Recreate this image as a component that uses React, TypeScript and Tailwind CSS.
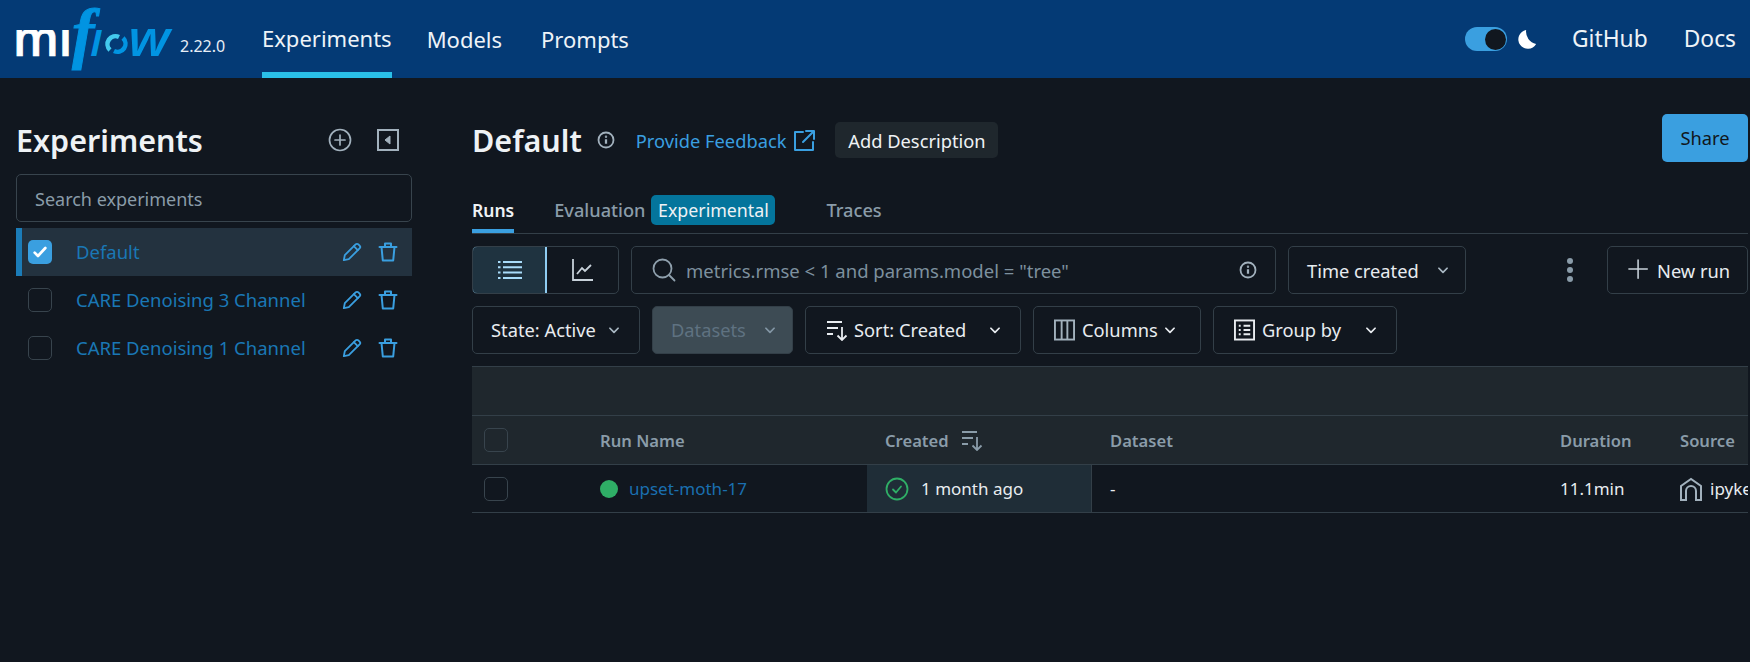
import React from 'react';

const font = '"Noto Sans", "Open Sans", sans-serif';

type IconProps = { className?: string };

function Stroke({ className, children, box = 24, width = 2 }: IconProps & { children: React.ReactNode; box?: number; width?: number }) {
  return (
    <svg viewBox={`0 0 ${box} ${box}`} fill="none" stroke="currentColor" strokeWidth={width} strokeLinecap="round" strokeLinejoin="round" className={className}>
      {children}
    </svg>
  );
}

const Chevron = ({ className = 'w-[14px] h-[14px] text-[#a9b8c3]' }: IconProps) => (
  <Stroke className={className} width={3}><path d="M5 9l7 7 7-7" /></Stroke>
);

const Info = ({ className }: IconProps) => (
  <Stroke className={className} width={2.4}>
    <circle cx="12" cy="12" r="10" />
    <path d="M12 11v6" strokeWidth={3} strokeLinecap="butt" />
    <circle cx="12" cy="7.5" r="0.6" strokeWidth={2} />
  </Stroke>
);

const Pencil = () => (
  <Stroke className="w-[20px] h-[20px] text-[#3a9fe0]" box={20} width={1.8}>
    <path d="M1.8 18.2l1-5L13.6 2.4c.8-.8 2-.8 2.8 0l1.2 1.2c.8.8.8 2 0 2.8L6.800 17.200z" />
    <path d="M11.800 4.200l4 4" />
  </Stroke>
);

const Trash = () => (
  <Stroke className="w-[20px] h-[22px] text-[#3a9fe0]" box={20} width={2}>
    <path d="M1.500 5h17" />
    <path d="M7 5V1.500h6V5" />
    <path d="M3.500 5l1.300 13.500h10.400L16.500 5" />
  </Stroke>
);

const SortIcon = ({ className }: IconProps) => (
  <svg viewBox="0 0 22 22" fill="none" stroke="currentColor" strokeWidth="1.800" className={className}>
    <path d="M1 3h15M1 9h11M1 15h6" />
    <path d="M16 8v13M11.500 16.500L16 21l4.500-4.500" />
  </svg>
);

function Logo() {
  return (
    <svg width="160" height="66" viewBox="0 0 160 66" className="shrink-0">
      <clipPath id="logo-top"><rect x="0" y="24" width="160" height="42" /></clipPath>
      {/* keeps the f's crossbar off the l of "ml" */}
      <clipPath id="logo-f">
        <rect x="55" y="0" width="105" height="52" />
        <rect x="40" y="52" width="120" height="14" />
      </clipPath>
      <text x="-1" y="50" fill="#ffffff" stroke="#ffffff" strokeWidth="0.7" clipPath="url(#logo-top)" fontFamily='"Open Sans", sans-serif' fontWeight="600" fontSize="48">ml</text>
      <text x="58" y="50" fill="#0194e2" clipPath="url(#logo-f)" fontFamily='"Liberation Serif", serif' fontStyle="italic" fontWeight="700" stroke="#0194e2" strokeWidth="1" fontSize="67">f</text>
      <text x="76" y="50" fill="#0194e2" clipPath="url(#logo-top)" fontFamily='"Open Sans", sans-serif' fontStyle="italic" fontWeight="600" fontSize="46">l</text>
      <path d="M96 44a8 8 0 0 1 9-13" fill="none" stroke="#43c9ed" strokeWidth="4.500" />
      <path d="M109 32a8 8 0 0 1-9 13" fill="none" stroke="#0194e2" strokeWidth="4.500" />
      <text x="114" y="50" fill="#0194e2" fontFamily='"Open Sans", sans-serif' fontStyle="italic" fontWeight="600" fontSize="48" textLength="42" lengthAdjust="spacingAndGlyphs">w</text>
    </svg>
  );
}

const experiments = [
  { name: 'Default', checked: true },
  { name: 'CARE Denoising 3 Channel', checked: false },
  { name: 'CARE Denoising 1 Channel', checked: false },
];

const btn = 'h-12 rounded-[5px] border border-[#333f48] flex items-center text-[18.300px] shrink-0';
const checkbox = 'w-6 h-6 rounded-[5px] border border-[#38444d]';
const headCell = 'pl-[18px] flex items-center text-[16.600px] font-semibold text-[#8a9ca9] overflow-hidden whitespace-nowrap';
const bodyCell = 'pl-[18px] flex items-center text-[17px] text-[#e8ecf0] overflow-hidden whitespace-nowrap';

export default function App() {
  return (
    <div className="w-full h-[662px] overflow-hidden bg-[#11171f]" style={{ fontFamily: font }}>
      {/* Top nav */}
      <header className="h-[78px] bg-[#043a75] flex items-center pl-[14px] pr-[14px] text-white">
        <Logo />
        <span className="text-[16px] mt-[14px] ml-[6px] w-[82px] text-[#e8eef5]">2.22.0</span>
        <nav className="flex h-full text-[22px] text-[#eef3f8]">
          <a className="h-full flex items-center border-b-[6px] border-[#2ac0e8] pt-[4px]">Experiments</a>
          <a className="h-full flex items-center ml-[35px]">Models</a>
          <a className="h-full flex items-center ml-[39px]">Prompts</a>
        </nav>
        <div className="ml-auto flex items-center text-[22.800px] text-[#eef3f8]">
          <div className="w-[42px] h-6 rounded-full bg-[#3a9fe0] flex items-center justify-end pr-[1px]">
            <div className="w-[21px] h-[21px] rounded-full bg-[#11171f]" />
          </div>
          <svg viewBox="0 0 21 22" className="w-[19px] h-[22px] ml-[11px]" fill="white">
            <path d="M9 1A10.500 10.500 0 1 0 20 16.500A14 14 0 0 1 9 1z" />
          </svg>
          <a className="ml-[35px]">GitHub</a>
          <a className="ml-[36px]">Docs</a>
        </div>
      </header>

      <div className="flex">
        {/* Sidebar */}
        <aside className="w-[472px] shrink-0 pl-4 pr-[60px] pt-9">
          <div className="h-[52px] flex items-center">
            <h1 className="text-[30.500px] font-semibold text-[#eef2f5] pt-[2px]">Experiments</h1>
            <Stroke className="w-6 h-6 ml-auto text-[#a2b1bd]" width={1.700}>
              <circle cx="12" cy="12" r="10.500" />
              <path d="M12 7v10M7 12h10" />
            </Stroke>
            <svg viewBox="0 0 22 22" className="w-[22px] h-[22px] ml-[25px] mr-[13px] text-[#a2b1bd]" fill="none" stroke="currentColor" strokeWidth="2">
              <rect x="1" y="1" width="20" height="20" />
              <path d="M13 7v8l-5-4z" fill="currentColor" strokeWidth="1" />
            </svg>
          </div>
          <div className="mt-2 h-12 rounded-[5px] border border-[#38444d] pl-[18px] pt-[2px] flex items-center text-[18px] text-[#8a9ca9]">
            Search experiments
          </div>
          <ul className="mt-[6px]">
            {experiments.map((e) => (
              <li key={e.name} className={`h-12 flex items-center text-[18.500px] text-[#1a77b5] pl-3 ${e.checked ? 'bg-[#23323f] relative' : ''}`}>
                {e.checked && <span className="absolute left-0 top-0 bottom-0 w-[6px] bg-[#1b7cb8]" />}
                {e.checked ? (
                  <span className="w-6 h-6 rounded-[5px] bg-[#3a9fe0] flex items-center justify-center relative">
                    <Stroke className="w-[16px] h-[16px] text-white" width={4}><path d="M4 13l5 5 11-12" /></Stroke>
                  </span>
                ) : (
                  <span className={checkbox} />
                )}
                <span className="ml-6">{e.name}</span>
                <span className="ml-auto mr-[14px] flex items-center gap-4"><Pencil /><Trash /></span>
              </li>
            ))}
          </ul>
        </aside>

        {/* Main */}
        <main className="flex-1 pr-[2px] pt-9 min-w-0">
          <div className="flex items-start">
            <div className="h-[52px] flex items-center">
              <h2 className="text-[30.500px] font-semibold text-[#eef2f5] pt-[2px]">Default</h2>
              <Info className="w-[18px] h-[18px] ml-[15px] text-[#a2b1bd]" />
              <a className="ml-[21px] pt-[2px] text-[18.300px] text-[#3a9fe0]">Provide Feedback</a>
              <Stroke className="w-[23px] h-[23px] ml-[7px] text-[#3a9fe0]" box={23} width={2}>
                <path d="M10 3H2v18h18v-8" />
                <path d="M13 2h8v8M21 2L10 13" />
              </Stroke>
              <button className="ml-[19px] h-9 w-[163px] pt-[2px] rounded-[5px] bg-[#1f272d] text-[18.300px] text-[#eef2f5] whitespace-nowrap">Add Description</button>
            </div>
            <button className="ml-auto w-[86px] h-12 rounded-[5px] bg-[#3a9fe0] text-[18.300px] text-[#11171c]">Share</button>
          </div>

          {/* Tabs */}
          <div className="mt-[29px] h-[39px] border-b border-[#333f48] flex items-start text-[18.200px] font-medium text-[#8a9ca9]">
            <span className="h-[38px] border-b-4 border-[#3a9fe0] text-[#eef2f5] text-[17.500px] font-semibold leading-[30px]">Runs</span>
            <span className="ml-[40px] leading-[30px]">Evaluation</span>
            <span className="ml-[6px] h-[30px] w-[124px] text-center rounded-[5px] bg-[#04759c] text-[#eef2f5] text-[17.800px] font-normal leading-[30px]">Experimental</span>
            <span className="ml-[51px] leading-[30px]">Traces</span>
          </div>

          {/* Toolbar */}
          <div className="mt-3 flex gap-3">
            <div className={`${btn} w-[147px] overflow-hidden`}>
              <div className="w-[74px] h-full bg-[#1f3340] border-r border-[#8fcdf2] flex items-center justify-center relative">
                <span className="absolute -left-px -top-px -bottom-px right-0 rounded-l-[5px] border border-[#8fcdf2]" />
                <svg viewBox="0 0 24 20" className="w-[24px] h-[20px] text-[#a9dcfa]" fill="none" stroke="currentColor" strokeWidth="2">
                  <path d="M5 2h19M5 7.300h19M5 12.600h19M5 18h19" />
                  <path d="M0 2h2.500M0 7.300h2.500M0 12.600h2.500M0 18h2.500" />
                </svg>
              </div>
              <div className="flex-1 flex items-center justify-center">
                <svg viewBox="0 0 22 24" className="w-[22px] h-[24px] text-[#c8d2da]" fill="none" stroke="currentColor" strokeWidth="1.800">
                  <path d="M1 1v21h20" />
                  <path d="M5 16l5-6 3 3 6-6" />
                </svg>
              </div>
            </div>
            <div className={`${btn} w-[645px] pl-5 text-[#7d909e]`}>
              <Stroke className="w-6 h-6 text-[#8fa0ad]" width={1.800}>
                <circle cx="10.500" cy="10.500" r="9" />
                <path d="M17 17l5.500 5.500" />
              </Stroke>
              <span className="ml-[10px] pt-[2px] text-[18.500px] whitespace-pre">metrics.rmse &lt; 1 and params.model = "tree"</span>
              <Info className="w-[18px] h-[18px] ml-auto mr-[18px] text-[#a2b1bd]" />
            </div>
            <div className={`${btn} w-[178px] pl-[18px] text-[#e8ecf0]`}>
              <span className="pt-[2px]">Time created</span>
              <Chevron className="w-[14px] h-[14px] ml-auto mr-[15px] text-[#a9b8c3]" />
            </div>
            <div className="flex-1 flex items-center justify-end mr-[22px]">
              <span className="flex flex-col gap-[3px]">
                <i className="w-[6px] h-[6px] rounded-full bg-[#8a9ca9]" />
                <i className="w-[6px] h-[6px] rounded-full bg-[#8a9ca9]" />
                <i className="w-[6px] h-[6px] rounded-full bg-[#8a9ca9]" />
              </span>
            </div>
            <div className={`${btn} w-[141px] pl-5 text-[#e8ecf0]`}>
              <Stroke className="w-[22px] h-[22px] text-[#c8d2da]" width={1.700}><path d="M11 1v20M1 11h20" /></Stroke>
              <span className="ml-[7px] pt-[2px]">New run</span>
            </div>
          </div>

          <div className="mt-3 flex gap-3">
            <div className={`${btn} w-[168px] pl-[18px] text-[#e8ecf0]`}>
              State: Active
              <Chevron className="w-[14px] h-[14px] ml-auto mr-[18px] text-[#a9b8c3]" />
            </div>
            <div className={`${btn} w-[141px] pl-[18px] bg-[#3d4b54] text-[#5f7281]`}>
              Datasets
              <Chevron className="w-[14px] h-[14px] ml-auto mr-[15px] text-[#8396a5]" />
            </div>
            <div className={`${btn} w-[216px] pl-5 text-[#e8ecf0]`}>
              <SortIcon className="w-[22px] h-[22px] text-[#e8ecf0]" />
              <span className="ml-[6px]">Sort: Created</span>
              <Chevron className="w-[14px] h-[14px] ml-auto mr-[18px] text-[#e8ecf0]" />
            </div>
            <div className={`${btn} w-[168px] pl-5 text-[#e8ecf0]`}>
              <svg viewBox="0 0 22 22" className="w-[21px] h-[22px] text-[#a2b1bd]" fill="none" stroke="currentColor" strokeWidth="2">
                <rect x="1" y="1" width="20" height="20" />
                <path d="M8 1v20M14 1v20" />
              </svg>
              <span className="ml-[7px]">Columns</span>
              <Chevron className="w-[14px] h-[14px] ml-[5px] text-[#e8ecf0]" />
            </div>
            <div className={`${btn} w-[184px] pl-5 text-[#e8ecf0]`}>
              <svg viewBox="0 0 22 22" className="w-[21px] h-[22px] text-[#e8ecf0]" fill="none" stroke="currentColor" strokeWidth="2">
                <rect x="1" y="1" width="20" height="20" />
                <path d="M5 6.500h2M5 11h2M5 15.500h2M10 6.500h7M10 11h7M10 15.500h7" />
              </svg>
              <span className="ml-[7px]">Group by</span>
              <Chevron className="w-[14px] h-[14px] ml-auto mr-[18px] text-[#e8ecf0]" />
            </div>
          </div>

          {/* Runs table */}
          <div className="mt-3 border-t border-[#333f48]">
            <div className="h-[49px] bg-[#1f272d] border-b border-[#333f48]" />
            <div className="h-[49px] bg-[#1f272d] border-b border-[#333f48] grid grid-cols-[128px_267px_225px_450px_120px_86px]">
              <div className="pl-3 flex items-center"><span className={checkbox} /></div>
              <div className="flex items-center pt-[2px] text-[16.600px] font-semibold text-[#8a9ca9]">Run Name</div>
              <div className={headCell}>
                <span className="pt-[2px]">Created</span>
                <SortIcon className="w-[22px] h-[22px] ml-[12px] text-[#8a9ca9]" />
              </div>
              <div className={`${headCell} pt-[2px]`}>Dataset</div>
              <div className={`${headCell} pt-[2px]`}>Duration</div>
              <div className={`${headCell} pt-[2px]`}>Source</div>
            </div>
            <div className="h-[48px] border-b border-[#333f48] grid grid-cols-[128px_267px_225px_450px_120px_86px]">
              <div className="pl-3 flex items-center"><span className={checkbox} /></div>
              <div className="flex items-center text-[17px] text-[#1a6fb0]">
                <span className="w-[18px] h-[18px] rounded-full bg-[#2fae66]" />
                <span className="ml-[11px]">upset-moth-17</span>
              </div>
              <div className={`${bodyCell} bg-[#1f2d37] border-r border-[#333f48]`}>
                <Stroke className="w-6 h-6 text-[#2fae66]" width={1.800}>
                  <circle cx="12" cy="12" r="10.500" />
                  <path d="M8 12.500l3 3 5-6" />
                </Stroke>
                <span className="ml-3">1 month ago</span>
              </div>
              <div className={bodyCell}>-</div>
              <div className={bodyCell}>11.1min</div>
              <div className={bodyCell}>
                <svg viewBox="0 0 22 24" className="w-[22px] h-6 shrink-0 text-[#a2b1bd]" fill="none" stroke="currentColor" strokeWidth="2">
                  <path d="M1 23V9l10-7 10 7v14h-5v-9a5 5 0 0 0-10 0v9z" />
                </svg>
                <span className="ml-2">ipykernel</span>
              </div>
            </div>
          </div>
        </main>
      </div>
    </div>
  );
}
